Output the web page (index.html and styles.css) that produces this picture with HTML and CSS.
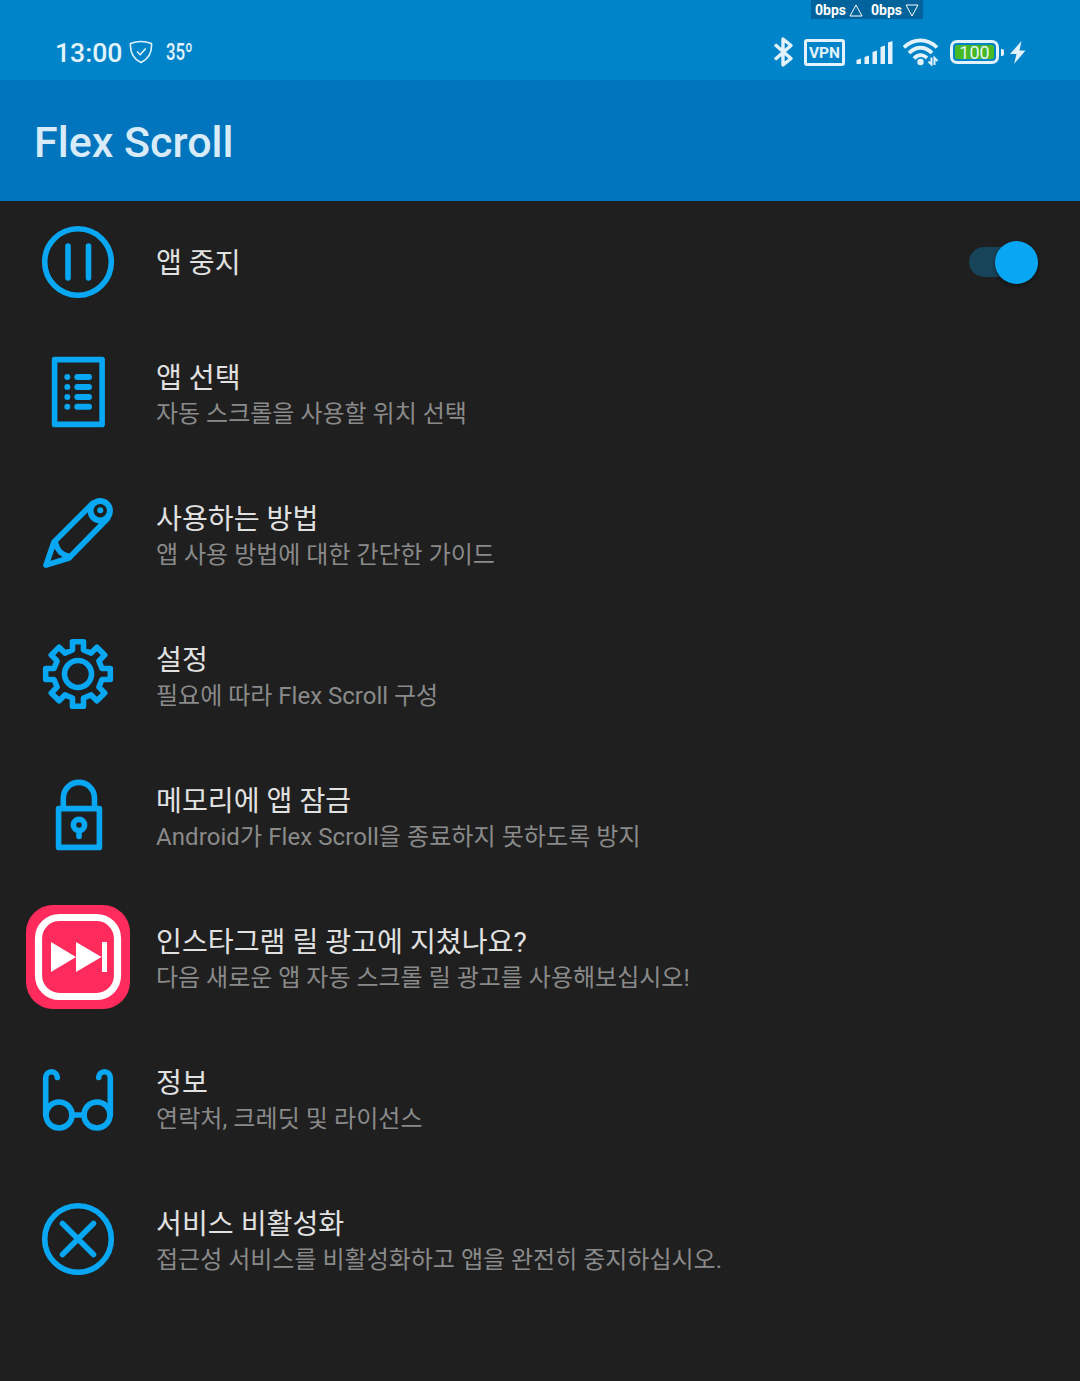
FILE: index.html
```html
<!DOCTYPE html>
<html lang="ko">

<head>
    <meta charset="UTF-8">
    <meta name="viewport" content="width=device-width, initial-scale=1.0">
    <title>Flex Scroll</title>
    <link rel="stylesheet" href="styles.css">
</head>

<body>
    <div class="status-bar">
        <div class="net-speed">
            <span>0bps</span>
            <svg width="14" height="13" viewBox="0 0 14 13"><path d="M7 1L13 12H1z"/></svg>
            <span class="down">0bps</span>
            <svg width="14" height="13" viewBox="0 0 14 13"><path d="M7 12L13 1H1z"/></svg>
        </div>
        <div class="status-left">
            <span class="time">13:00</span>
            <svg class="shield" width="24" height="24" viewBox="0 0 24 24">
                <path d="M12 1.5C8.500 1.500 5 2.200 1.500 3.500C1 11 3.500 18.500 12 22.500C20.500 18.500 23 11 22.500 3.500C19 2.200 15.500 1.500 12 1.500z"/>
                <path d="M8 11.500L11.200 14.700L16.700 8.500"/>
            </svg>
            <span class="temp">35º</span>
        </div>
        <div class="status-right">
            <svg class="bluetooth" width="20" height="32" viewBox="0 0 20 32">
                <path d="M2 8.500L18 22.500L10 29V3L18 9.500L2 23.500"/>
            </svg>
            <span class="vpn">VPN</span>
            <svg class="signal" width="37" height="26" viewBox="0 0 37 26">
                <path d="M.500 25V21L5 19.500V25zM8.500 25V18L13 16.500V25zM16.500 25V13L21 11.500V25zM24.500 25V8L29 6.500V25zM32 25V3.500L36.500 2V25z"/>
            </svg>
            <svg class="wifi" width="36" height="28" viewBox="0 0 36 28">
                <path d="M1 9.500C10.500 0 24.500 0 34 9.500M6 15C13 8 22 8 29 15M11 20.500C15 16 20 16 24 20"/>
                <circle cx="17.500" cy="24" r="3.200"/>
                <path class="arrows" d="M28.500 19.500V26.500L25.500 23.500M31.500 27V20L34.500 23"/>
            </svg>
            <div class="battery"><span class="level">100</span></div>
            <svg class="bolt" width="16" height="23" viewBox="0 0 16 23">
                <path d="M11.500 0L0 13H6.500L4 23L15.500 9.500H9.500z"/>
            </svg>
        </div>
    </div>

    <header class="app-bar">
        <h1>Flex Scroll</h1>
    </header>

    <main class="menu">
        <div class="item item-toggle">
            <svg class="icon" viewBox="-52 -52 104 104">
                <circle r="33.300"/>
                <path d="M-10 -16V16M10.500 -16V16"/>
            </svg>
            <div class="text">
                <div class="title">앱 중지</div>
            </div>
            <div class="switch"><span class="thumb"></span></div>
        </div>

        <div class="item">
            <svg class="icon" viewBox="-52 -52 104 104">
                <rect x="-23.400" y="-33.400" width="47.500" height="64.800"/>
                <path class="dots" d="M-10.700 -16h.01M-10.700 -6h.01M-10.700 4h.01M-10.700 13.700h.01M-.700 -16H11M-.700 -6H11M-.700 4H11M-.700 13.700H11"/>
            </svg>
            <div class="text">
                <div class="title">앱 선택</div>
                <div class="summary">자동 스크롤을 사용할 위치 선택</div>
            </div>
        </div>

        <div class="item">
            <svg class="icon" viewBox="-52 -52 104 104">
                <path d="M14.500 -30.500L-24 8L-32 31.200L-9 24L29.500 -15.500"/>
                <path d="M-22.500 9Q-20 20 -9 22.500"/>
                <circle class="eraser" cx="22.200" cy="-23.200" r="9.700"/>
                <circle class="fill" cx="22.300" cy="-23.700" r="3"/>
            </svg>
            <div class="text">
                <div class="title">사용하는 방법</div>
                <div class="summary">앱 사용 방법에 대한 간단한 가이드</div>
            </div>
        </div>

        <div class="item">
            <svg class="icon" viewBox="-52 -51 104 104">
                <circle r="13.500"/>
                <path d="M-5.500 -24V-32.300H5.500V-24L13.100 -20.900L18.900 -26.700L26.700 -18.900L20.900 -13.100L24 -5.500H32.300V5.500H24L20.900 13.100L26.700 18.900L18.900 26.700L13.100 20.900L5.500 24V32.300H-5.500V24L-13.100 20.900L-18.900 26.700L-26.700 18.900L-20.900 13.100L-24 5.500H-32.300V-5.500H-24L-20.900 -13.100L-26.700 -18.900L-18.900 -26.700L-13.100 -20.900z"/>
            </svg>
            <div class="text">
                <div class="title">설정</div>
                <div class="summary">필요에 따라 Flex Scroll 구성</div>
            </div>
        </div>

        <div class="item">
            <svg class="icon" viewBox="-52 -52 104 104">
                <rect x="-19.400" y="-7.400" width="40.800" height="38.800"/>
                <path d="M-14.700 -8V-18A15.600 15.600 0 0 1 16.500 -18V-8M1 15V20.500"/>
                <circle cx="1" cy="9" r="5.600"/>
            </svg>
            <div class="text">
                <div class="title">메모리에 앱 잠금</div>
                <div class="summary mixed">Android가 Flex Scroll을 종료하지 못하도록 방지</div>
            </div>
        </div>

        <div class="item">
            <svg class="icon ad" viewBox="-52 -52 104 104">
                <rect class="ad-bg" x="-52" y="-52" width="104" height="104" rx="27"/>
                <rect class="ad-ring" x="-39.500" y="-39.500" width="79" height="79" rx="21"/>
                <path class="ad-mark" d="M-27 -15L-2 0L-27 15zM-2 -15L23.500 0L-2 15zM24 -15H29V15H24z"/>
            </svg>
            <div class="text">
                <div class="title">인스타그램 릴 광고에 지쳤나요?</div>
                <div class="summary">다음 새로운 앱 자동 스크롤 릴 광고를 사용해보십시오!</div>
            </div>
        </div>

        <div class="item">
            <svg class="icon" viewBox="-52 -52 104 104">
                <circle cx="-19" cy="17" r="13"/>
                <circle cx="19" cy="17" r="13"/>
                <path d="M-6 17H6M-32.300 17V-20.500A5.800 5.800 0 0 1 -20.700 -20.500M32.300 17V-20.500A5.800 5.800 0 0 0 20.700 -20.500"/>
            </svg>
            <div class="text">
                <div class="title">정보</div>
                <div class="summary mixed">연락처, 크레딧 및 라이선스</div>
            </div>
        </div>

        <div class="item">
            <svg class="icon" viewBox="-52 -52 104 104">
                <circle r="33.300"/>
                <path d="M-15.500 -15.500L15.500 15.500M15.500 -15.500L-15.500 15.500"/>
            </svg>
            <div class="text">
                <div class="title">서비스 비활성화</div>
                <div class="summary">접근성 서비스를 비활성화하고 앱을 완전히 중지하십시오.</div>
            </div>
        </div>
    </main>
</body>

</html>
```

FILE: styles.css
```css
* {
    box-sizing: border-box;
}

body {
    margin: 0;
    min-height: 1381px;
    background-color: #1f1f1f;
    color: #e1e1e1;
    font-family: Roboto, "Noto Sans CJK KR", sans-serif;
}

svg {
    display: block;
    flex-shrink: 0;
    fill: none;
}

/* status bar */
.status-bar {
    position: relative;
    display: flex;
    justify-content: space-between;
    height: 80px;
    padding: 36px 54px 12px 55px;
    background-color: #0084c9;
    color: #e2f3fd;
}

.status-left,
.status-right {
    display: flex;
    align-items: center;
}

.status-left svg,
.status-right svg {
    stroke: #e2f3fd;
}

.net-speed {
    position: absolute;
    top: 0;
    left: 811px;
    display: flex;
    align-items: center;
    width: 112px;
    height: 19px;
    padding: 1px 0 0 4px;
    background-color: #00639b;
    color: #fff;
    font-size: 14px;
    font-weight: bold;
}

.net-speed svg {
    margin-left: 3px;
    stroke: #fff;
}

.net-speed .down {
    margin-left: 8px;
}

.time {
    width: 74px;
    font-size: 26.6px;
    font-weight: 500;
    line-height: 32px;
    padding-top: 2px;
}

.shield {
    stroke-width: 1.6;
}

.temp {
    margin-left: 13px;
    font-size: 24px;
    font-weight: 500;
    transform: scaleX(0.7);
    transform-origin: left;
}

.bluetooth {
    stroke-width: 3.4;
    stroke-linejoin: round;
}

.vpn {
    width: 41px;
    height: 27px;
    margin-left: 11px;
    border: 3px solid #e2f3fd;
    border-radius: 3px;
    font-size: 15.5px;
    font-weight: bold;
    line-height: 22px;
    text-align: center;
}

.signal {
    margin-left: 11px;
}

.status-right .signal {
    fill: #e2f3fd;
    stroke: none;
}

.wifi {
    margin-left: 10px;
    stroke-width: 3.8;
}

.wifi circle {
    fill: #e2f3fd;
    stroke: none;
}

.wifi .arrows {
    stroke-width: 2;
}

.battery {
    position: relative;
    width: 49px;
    height: 24px;
    margin-left: 11px;
    padding: 2px;
    border: 3px solid #e2f3fd;
    border-radius: 7px;
}

.battery::after {
    content: "";
    position: absolute;
    top: 6px;
    right: -8px;
    width: 3px;
    height: 7px;
    border-radius: 0 2px 2px 0;
    background-color: #e2f3fd;
}

.level {
    display: block;
    height: 14px;
    border-radius: 2px;
    background-color: #45b922;
    font-size: 18px;
    line-height: 15px;
    text-align: center;
}

.bolt {
    margin-left: 11px;
}

.status-right .bolt {
    fill: #e2f3fd;
    stroke: none;
}

/* title bar */
.app-bar {
    display: flex;
    align-items: center;
    height: 121px;
    padding: 2px 34px 0;
    background-color: #0074bc;
}

h1 {
    margin: 0;
    color: #d8ebfa;
    font-size: 43px;
    font-weight: 500;
}

/* menu */
.item {
    display: flex;
    align-items: flex-start;
    height: 141px;
    padding: 19px 42px 0 26px;
}

.item-toggle {
    height: 121px;
    padding-top: 9px;
}

.icon {
    width: 104px;
    height: 104px;
    margin-right: 26px;
    stroke: #08a7f4;
    stroke-width: 5.6;
    stroke-linecap: round;
    stroke-linejoin: round;
}

.icon .dots,
.icon .eraser {
    stroke-width: 6;
}

.icon .fill {
    fill: #08a7f4;
    stroke: none;
}

.ad-bg {
    fill: #ff2b5c;
    stroke: none;
}

.ad-ring {
    stroke: #fff;
    stroke-width: 7.2;
}

.ad-mark {
    fill: #fff;
    stroke: none;
}

.text {
    flex: 1;
    padding-top: 20px;
    white-space: nowrap;
}

.item-toggle .text {
    padding-top: 36px;
}

.title {
    font-size: 28.15px;
    line-height: 36px;
}

.summary {
    color: #8a8a8a;
    font-size: 24px;
    line-height: 35px;
}

.summary.mixed {
    letter-spacing: 0.08px;
}

.switch {
    display: flex;
    justify-content: flex-end;
    align-items: center;
    width: 69px;
    height: 30px;
    margin-top: 37px;
    border-radius: 15px;
    background-color: #184459;
}

.thumb {
    flex-shrink: 0;
    width: 43px;
    height: 43px;
    border-radius: 50%;
    background-color: #08a7f4;
    box-shadow: 0 2px 4px rgba(0, 0, 0, 0.4);
}
```
